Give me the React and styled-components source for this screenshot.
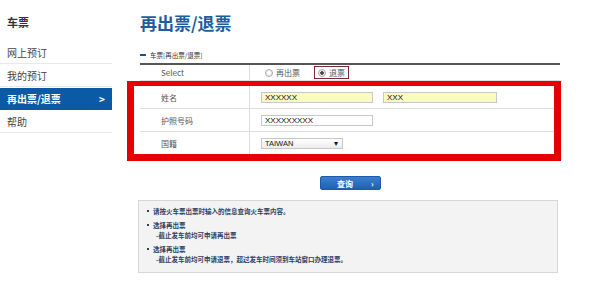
import React from 'react';
import styled, { createGlobalStyle } from 'styled-components';

const GlobalStyle = createGlobalStyle`
  html, body {
    margin: 0;
    padding: 0;
    background: #fff;
    font-family: "Noto Sans CJK SC", "Liberation Sans", sans-serif;
    color: #333;
  }
`;

const Page = styled.div`
  display: flex;
  width: 600px;
  height: 300px;
  overflow: hidden;
`;

const Sidebar = styled.nav`
  width: 112px;
  flex-shrink: 0;
  padding-top: 12px;
`;

const SideTitle = styled.div`
  font-size: 11px;
  font-weight: 700;
  color: #333;
  padding-left: 7px;
  height: 20px;
  line-height: 20px;
  margin-bottom: 10px;
`;

const SideItem = styled.div`
  display: flex;
  justify-content: space-between;
  align-items: center;
  height: 21px;
  padding: 0 7px;
  font-size: 10px;
  color: ${p => (p.$active ? '#fff' : '#444')};
  background: ${p => (p.$active ? '#0b5aa6' : 'transparent')};
  font-weight: ${p => (p.$active ? 700 : 400)};
  border-bottom: 1px solid ${p => (p.$active ? '#0b5aa6' : '#e8e8e8')};
  margin-bottom: 1px;
`;

const Main = styled.main`
  width: 420px;
  margin-left: 28px;
  padding-top: 13px;
`;

const Title = styled.h1`
  margin: 0;
  font-size: 17px;
  line-height: 20px;
  font-weight: 700;
  color: #1d5e9e;
`;

const SubHead = styled.div`
  display: flex;
  align-items: center;
  gap: 4px;
  margin-top: 17px;
  height: 10px;
  font-size: 6.5px;
  color: #333;
`;

const Dash = styled.span`
  display: inline-block;
  width: 6px;
  height: 2px;
  background: #1d4e86;
`;

const FormTable = styled.div`
  margin-top: 3px;
  border-top: 2px solid #555;
`;

const Row = styled.div`
  display: grid;
  grid-template-columns: 110px 1fr;
  height: ${p => p.$h || 22}px;
  border-bottom: 1px solid #ddd;
  &:last-child {
    border-bottom: none;
  }
`;

const Label = styled.div`
  display: flex;
  align-items: center;
  padding-left: 21px;
  font-size: 8px;
  color: #555;
  border-right: 1px solid #ddd;
`;

const Field = styled.div`
  display: flex;
  align-items: center;
  gap: 10px;
  padding-left: 11px;
`;

const Highlight = styled.div`
  margin-left: -13px;
  width: 420px;
  border: 7px solid #e60000;
  border-top-width: 5px;
`;

const HighRow = styled(Row)`
  margin-left: 6px;
  width: 414px;
`;

const TextBox = styled.div`
  width: ${p => p.$w}px;
  height: 11px;
  box-sizing: border-box;
  border: 1px solid #c8c8c8;
  background: ${p => (p.$yellow ? '#fafac4' : '#fff')};
  font-size: 8px;
  line-height: 9px;
  padding-left: 3px;
  color: #111;
  font-family: "Liberation Sans", sans-serif;
`;

const SelectBox = styled(TextBox)`
  display: flex;
  justify-content: space-between;
  align-items: center;
  padding-right: 4px;
  background: linear-gradient(#fff, #ececec);
  font-size: 7.5px;
`;

const RadioLabel = styled.label`
  display: flex;
  align-items: center;
  gap: 3px;
  font-size: 8px;
  color: #555;
  height: 11px;
  padding: 0 3px;
  border: 1px solid ${p => (p.$boxed ? '#7a2b2b' : 'transparent')};
`;

const Radio = styled.span`
  width: 6px;
  height: 6px;
  border-radius: 50%;
  border: 1px solid #aaa;
  background: radial-gradient(circle, ${p => (p.$on ? '#444 1.5px' : '#fff 1.5px')}, #eee 2px);
`;

const ButtonRow = styled.div`
  display: flex;
  justify-content: center;
  margin-top: 15px;
`;

const Button = styled.button`
  display: flex;
  align-items: center;
  justify-content: flex-end;
  gap: 18px;
  width: 61px;
  height: 14px;
  border: 1px solid #1f5aa8;
  border-radius: 2px;
  background: linear-gradient(#3a7fd0, #235fb2);
  color: #fff;
  font-size: 8px;
  font-weight: 700;
  padding: 0 6px 0 0;
  font-family: inherit;
`;

const Notice = styled.ul`
  list-style: none;
  margin: 10px 0 0 -2px;
  padding: 5px 6px 8px 8px;
  width: 420px;
  box-sizing: border-box;
  background: #f3f3f3;
  border: 1px solid #d6d6d6;
`;

const NoticeItem = styled.li`
  position: relative;
  padding-left: 6px;
  font-size: 6.5px;
  line-height: 10px;
  font-weight: 700;
  color: #2d3f63;
  margin-bottom: 4px;
  &:last-child {
    margin-bottom: 0;
  }
  &::before {
    content: '';
    position: absolute;
    left: 0;
    top: 4px;
    width: 2px;
    height: 2px;
    background: #2d3f63;
  }
`;

const Sub = styled.div`
  padding-left: 3px;
`;

export default function App() {
  return (
    <Page>
      <GlobalStyle />
      <Sidebar>
        <SideTitle>车票</SideTitle>
        <SideItem>网上预订</SideItem>
        <SideItem>我的预订</SideItem>
        <SideItem $active>
          <span>再出票/退票</span>
          <span>&gt;</span>
        </SideItem>
        <SideItem>帮助</SideItem>
      </Sidebar>
      <Main>
        <Title>再出票/退票</Title>
        <SubHead>
          <Dash />
          <span>车票[再出票/退票]</span>
        </SubHead>
        <FormTable>
          <Row $h={15}>
            <Label>Select</Label>
            <Field>
              <RadioLabel>
                <Radio />
                再出票
              </RadioLabel>
              <RadioLabel $boxed>
                <Radio $on />
                退票
              </RadioLabel>
            </Field>
          </Row>
          <Highlight>
            <HighRow>
              <Label>姓名</Label>
              <Field>
                <TextBox $w={112} $yellow>XXXXXX</TextBox>
                <TextBox $w={114} $yellow>XXX</TextBox>
              </Field>
            </HighRow>
            <HighRow>
              <Label>护照号码</Label>
              <Field>
                <TextBox $w={112}>XXXXXXXXX</TextBox>
              </Field>
            </HighRow>
            <HighRow>
              <Label>国籍</Label>
              <Field>
                <SelectBox $w={82}>
                  <span>TAIWAN</span>
                  <span>▾</span>
                </SelectBox>
              </Field>
            </HighRow>
          </Highlight>
        </FormTable>
        <ButtonRow>
          <Button>
            <span>查询</span>
            <span>›</span>
          </Button>
        </ButtonRow>
        <Notice>
          <NoticeItem>请按火车票出票时输入的信息查询火车票内容。</NoticeItem>
          <NoticeItem>
            选择再出票
            <Sub>-截止发车前均可申请再出票</Sub>
          </NoticeItem>
          <NoticeItem>
            选择再出票
            <Sub>-截止发车前均可申请退票，超过发车时间须到车站窗口办理退票。</Sub>
          </NoticeItem>
        </Notice>
      </Main>
    </Page>
  );
}
